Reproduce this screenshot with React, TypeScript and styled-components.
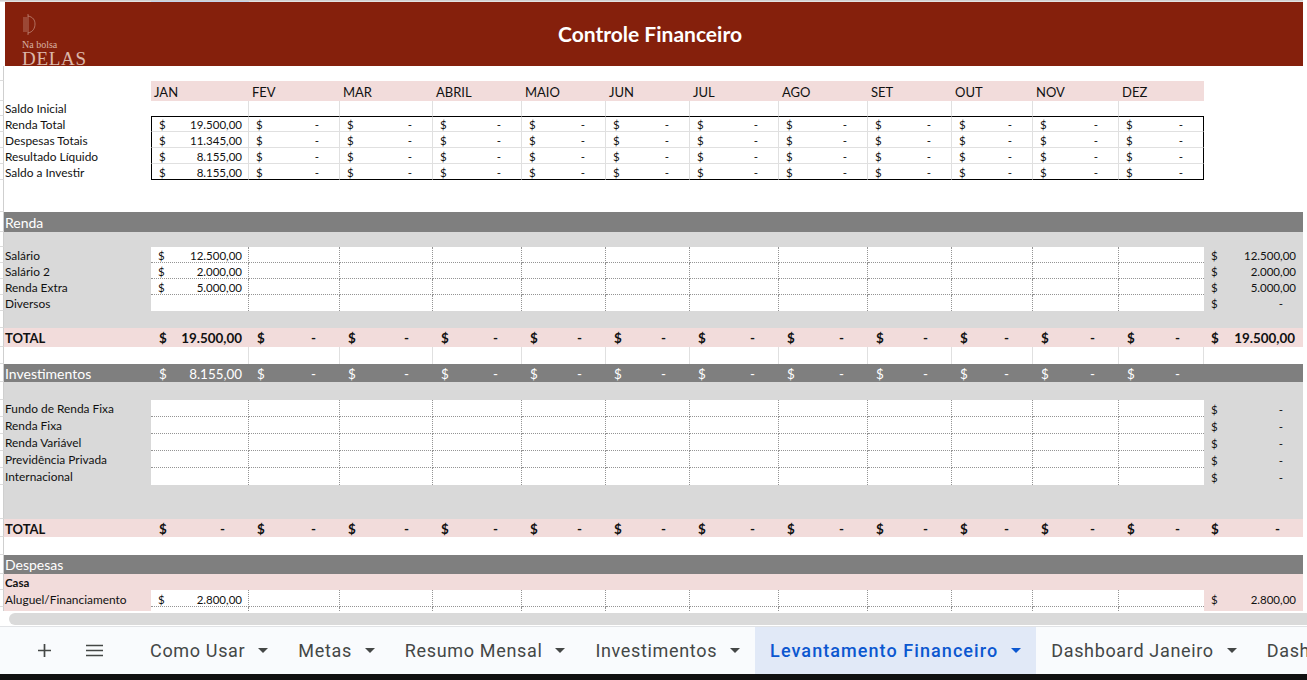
import React from "react";
import styled, { createGlobalStyle } from "styled-components";

const GlobalStyle = createGlobalStyle`
  html, body { margin: 0; padding: 0; height: 100%; overflow: hidden; background: #fff; }
  #root { height: 100vh; }
  * { box-sizing: border-box; }
`;

const COLS = "4px 147px 98px 91px 93px 89px 84px 84px 89px 89px 84px 81px 86px 85px 1fr";
const MONTHS = ["JAN", "FEV", "MAR", "ABRIL", "MAIO", "JUN", "JUL", "AGO", "SET", "OUT", "NOV", "DEZ"];
const COLORS = { red: "#85200c", pink: "#f2dcdb", grey: "#d9d9d9", dark: "#7f7f7f", white: "#fff", line: "#e0e0e0", dot: "#949494" };

const Page = styled.div`
  width: 100%;
  height: 100%;
  display: flex;
  flex-direction: column;
  background: #000;
  font-family: Lato, "Liberation Sans", sans-serif;
`;
const Sheet = styled.div`
  height: 611px;
  overflow: hidden;
  background: #fff;
  flex: none;
  padding-right: 4px;
`;
const TopStrip = styled.div`
  height: 2px;
  display: grid;
  grid-template-columns: 151px 98px 1fr;
  background: #e3e3e3;
  border-top: 1px solid #d0d0d0;
`;
const StripSelected = styled.div`
  grid-column: 2;
  background: #c6d4ee;
`;
const Banner = styled.div`
  height: 64px;
  margin-left: 5px;
  background: ${COLORS.red};
  display: grid;
  grid-template-columns: 1fr;
  position: relative;
  overflow: hidden;
`;
const BannerTitle = styled.h1`
  margin: 0;
  align-self: center;
  justify-self: center;
  padding: 0 8px 2px 0;
  color: #fff;
  font-size: 21px;
  font-weight: 700;
`;
const Logo = styled.div`
  position: absolute;
  left: 17px;
  top: 12px;
  color: #e6c8bc;
  font-family: "Liberation Serif", serif;
  display: flex;
  flex-direction: column;
  align-items: flex-start;
`;
const LogoMark = styled.svg`
  opacity: 0.8;
`;
const LogoSmall = styled.span`
  font-size: 10px;
  line-height: 10px;
  margin-top: 5px;
  opacity: 0.85;
`;
const LogoBig = styled.span`
  font-size: 19px;
  line-height: 18px;
  letter-spacing: 0.7px;
  margin-top: 0;
  font-weight: 400;
  opacity: 0.9;
`;
const Row = styled.div<{ $h: number; $bg?: string; $color?: string; $bold?: boolean }>`
  display: grid;
  grid-template-columns: ${COLS};
  height: ${(p) => p.$h}px;
  background: ${(p) => p.$bg ?? "#fff"};
  color: ${(p) => p.$color ?? "#111"};
  font-size: ${(p) => (p.$bold ? 13.4 : 11.5)}px;
  font-weight: ${(p) => (p.$bold ? 700 : 400)};
`;
const Gutter = styled.div`
  background: #fff;
  border-right: 1px solid #cfcfcf;
  border-bottom: 1px solid #dcdcdc;
`;
const Label = styled.div<{ $size?: number; $bold?: boolean; $lift?: number }>`
  display: flex;
  align-items: flex-end;
  padding: 0 0 ${(p) => p.$lift ?? 0}px 1px;
  white-space: nowrap;
  font-size: ${(p) => p.$size ?? 11.9}px;
  font-weight: ${(p) => (p.$bold ? 700 : "inherit")};
  line-height: 15px;
`;
const SectionLabel = styled(Label)`
  font-size: 14px;
  line-height: 18px;
`;
const InvestLabel = styled(SectionLabel)`
  line-height: 16px;
`;
const BlankCell = styled.div<{ $line?: "solid" | "dotted" | "none"; $bottom?: boolean; $bg?: string }>`
  background: ${(p) => p.$bg ?? "#fff"};
  border-right: ${(p) =>
    p.$line === "dotted" ? `1px dotted ${COLORS.dot}` : p.$line === "solid" ? `1px solid ${COLORS.line}` : "none"};
  border-bottom: ${(p) => (p.$bottom ? `1px dotted ${COLORS.dot}` : "none")};
`;
const Money = styled.div<{
  $line?: "solid" | "dotted" | "none";
  $bg?: string;
  $top?: boolean;
  $bottom?: boolean;
  $left?: boolean;
  $right?: boolean;
  $sep?: boolean;
  $dotted?: boolean;
  $padL?: number;
  $padR?: number;
  $padB?: number;
  $size?: number;
}>`
  display: flex;
  justify-content: space-between;
  align-items: flex-end;
  padding: 0 ${(p) => p.$padR ?? 6}px ${(p) => p.$padB ?? 0}px ${(p) => p.$padL ?? 7}px;
  line-height: ${(p) => (p.$bottom || p.$sep || p.$dotted ? 13 : 15)}px;
  ${(p) => (p.$size ? `font-size: ${p.$size}px;` : "")}
  white-space: nowrap;
  background: ${(p) => p.$bg ?? "transparent"};
  border-right: ${(p) =>
    p.$right ? "1px solid #000" : p.$line === "solid" ? `1px solid ${COLORS.line}` : p.$line === "dotted" ? `1px dotted ${COLORS.dot}` : "none"};
  border-left: ${(p) => (p.$left ? "1px solid #000" : "none")};
  border-top: ${(p) => (p.$top ? "1px solid #000" : "none")};
  border-bottom: ${(p) =>
    p.$bottom ? "1px solid #000" : p.$sep ? `1px solid ${COLORS.line}` : p.$dotted ? `1px dotted ${COLORS.dot}` : "none"};
`;

const Dollar = ({
  value,
  dash,
  valuePad,
  ...rest
}: { value?: string; dash?: number; valuePad?: number } & React.ComponentProps<typeof Money>) => (
  <Money $padR={value ? valuePad ?? 6 : dash ?? 20} {...rest}>
    <span>$</span>
    <span>{value ?? "-"}</span>
  </Money>
);

const MonthCell = styled.div`
  background: ${COLORS.pink};
  display: flex;
  align-items: flex-end;
  padding: 0 0 0 3px;
  font-size: 13px;
  line-height: 17px;
`;
const NoBg = styled.div``;

const Months = () => (
  <Row $h={20}>
    <Gutter />
    <NoBg />
    {MONTHS.map((m) => (
      <MonthCell key={m}>{m}</MonthCell>
    ))}
    <NoBg />
  </Row>
);

const Plain = ({ h, label }: { h: number; label: string }) => (
  <Row $h={h}>
    <Gutter />
    <Label>{label}</Label>
    {MONTHS.map((m, i) => (
      <BlankCell key={m} $line={i < 11 ? "solid" : "none"} />
    ))}
    <NoBg />
  </Row>
);

const Summary = ({ label, jan, first, last }: { label: string; jan: string; first?: boolean; last?: boolean }) => (
  <Row $h={16}>
    <Gutter />
    <Label>{label}</Label>
    {MONTHS.map((m, i) => (
      <Dollar
        key={m}
        value={i === 0 ? jan : undefined}
        $line={i < 11 ? "solid" : "none"}
        $top={first}
        $bottom={last}
        $sep={!last}
        $left={i === 0}
        $right={i === 11}
      />
    ))}
    <NoBg />
  </Row>
);

const Spacer = ({ h, bg }: { h: number; bg: string }) => (
  <Row $h={h} $bg={bg}>
    <Gutter />
  </Row>
);

const Section = ({ h, label }: { h: number; label: string }) => (
  <Row $h={h} $bg={COLORS.dark} $color="#fff">
    <Gutter />
    <SectionLabel>{label}</SectionLabel>
  </Row>
);

const Input = ({
  h,
  label,
  jan,
  total,
  last,
  lift,
  noTotal,
  bg = COLORS.grey,
}: {
  h: number;
  label: string;
  jan?: string;
  total?: string;
  last?: boolean;
  lift?: number;
  noTotal?: boolean;
  bg?: string;
}) => (
  <Row $h={h} $bg={bg}>
    <Gutter />
    <Label $lift={lift}>{label}</Label>
    {MONTHS.map((m, i) =>
      i === 0 && jan ? (
        <Dollar key={m} value={jan} $bg="#fff" $line="dotted" $dotted={!last} />
      ) : (
        <BlankCell key={m} $line={i < 11 ? "dotted" : "none"} $bottom={!last} />
      )
    )}
    {noTotal ? <NoBg /> : <Dollar value={total} dash={20} valuePad={7} $padL={7} />}
  </Row>
);

const Total = ({ h, lift, jan, total }: { h: number; lift: number; jan?: string; total?: string }) => (
  <Row $h={h} $bg={COLORS.pink} $bold>
    <Gutter />
    <Label $size={13} $lift={lift}>TOTAL</Label>
    {MONTHS.map((m, i) => (
      <Dollar key={m} value={i === 0 ? jan : undefined} dash={24} valuePad={7} $padL={8} $padB={lift} />
    ))}
    <Dollar value={total} dash={23} valuePad={8} $padL={7} $padB={lift} />
  </Row>
);

const InvestRow = () => (
  <Row $h={18} $bg={COLORS.dark} $color="#fff">
    <Gutter />
    <InvestLabel>Investimentos</InvestLabel>
    {MONTHS.map((m, i) => (
      <Dollar key={m} value={i === 0 ? "8.155,00" : undefined} dash={24} valuePad={7} $padL={8} $size={13.4} />
    ))}
    <NoBg />
  </Row>
);

const SolidBlank = ({ h }: { h: number }) => (
  <Row $h={h}>
    <Gutter />
    <NoBg />
    {MONTHS.map((m) => (
      <BlankCell key={m} $line="solid" />
    ))}
    <NoBg />
  </Row>
);

const Scroll = styled.div`
  height: 16px;
  flex: none;
  background: #fff;
  padding: 2px 0 1px 9px;
  border-bottom: 1px solid #e1e3e6;
`;
const ScrollThumb = styled.div`
  height: 12px;
  background: #dadada;
  border-radius: 6px 0 0 6px;
`;
const TabBar = styled.div`
  height: 47px;
  flex: none;
  background: #f9fbfd;
  display: flex;
  align-items: stretch;
  overflow: hidden;
  color: #444746;
`;
const TabTools = styled.div`
  width: 135px;
  flex: none;
  display: flex;
  align-items: center;
  padding-left: 36px;
  gap: 33px;
`;
const ToolIcon = styled.svg`
  width: 17px;
  height: 17px;
  flex: none;
`;
const Tab = styled.div<{ $active?: boolean }>`
  display: flex;
  align-items: center;
  gap: 13px;
  flex: none;
  padding: 0 15px;
  font-family: Roboto, sans-serif;
  font-size: 18px;
  font-weight: ${(p) => (p.$active ? 500 : 400)};
  letter-spacing: ${(p) => (p.$active ? 1.07 : 0.66)}px;
  white-space: nowrap;
  background: ${(p) => (p.$active ? "#e1e9f7" : "transparent")};
  color: ${(p) => (p.$active ? "#0b57d0" : "#444746")};
`;
const Caret = styled.span`
  width: 0;
  height: 0;
  border-left: 5.5px solid transparent;
  border-right: 5.5px solid transparent;
  border-top: 5.5px solid currentColor;
`;
const Black = styled.div`
  flex: 1;
  background: #111;
`;

const TABS = ["Como Usar", "Metas", "Resumo Mensal", "Investimentos", "Levantamento Financeiro", "Dashboard Janeiro", "Dashboard Fevereiro"];

export default function App() {
  return (
    <Page>
      <GlobalStyle />
      <Sheet>
        <TopStrip>
          <StripSelected />
        </TopStrip>
        <Banner>
          <Logo>
            <LogoMark width="14" height="21" viewBox="0 0 14 21" fill="none" stroke="#e6c8bc" strokeWidth="0.6">
              <path d="M2 3v15M4 3v15M6 0v21M6 2c5 1 7 4 7 8s-2 8-7 9" />
            </LogoMark>
            <LogoSmall>Na bolsa</LogoSmall>
            <LogoBig>DELAS</LogoBig>
          </Logo>
          <BannerTitle>Controle Financeiro</BannerTitle>
        </Banner>
        <Spacer h={15} bg="#fff" />
        <Months />
        <Plain h={15} label="Saldo Inicial" />
        <Summary label="Renda Total" jan="19.500,00" first />
        <Summary label="Despesas Totais" jan="11.345,00" />
        <Summary label="Resultado Líquido" jan="8.155,00" />
        <Summary label="Saldo a Investir" jan="8.155,00" last />
        <Spacer h={32} bg="#fff" />
        <Section h={20} label="Renda" />
        <Spacer h={15} bg={COLORS.grey} />
        <Input h={16} label="Salário" jan="12.500,00" total="12.500,00" />
        <Input h={16} label="Salário 2" jan="2.000,00" total="2.000,00" />
        <Input h={16} label="Renda Extra" jan="5.000,00" total="5.000,00" />
        <Input h={16} label="Diversos" last />
        <Spacer h={17} bg={COLORS.grey} />
        <Total h={19} lift={1} jan="19.500,00" total="19.500,00" />
        <SolidBlank h={17} />
        <InvestRow />
        <Spacer h={18} bg={COLORS.grey} />
        <Input h={17} lift={1} label="Fundo de Renda Fixa" />
        <Input h={17} lift={1} label="Renda Fixa" />
        <Input h={17} lift={1} label="Renda Variável" />
        <Input h={17} lift={1} label="Previdência Privada" />
        <Input h={17} lift={1} label="Internacional" last />
        <Spacer h={34} bg={COLORS.grey} />
        <Total h={18} lift={0} />
        <Spacer h={18} bg="#fff" />
        <Section h={19} label="Despesas" />
        <Row $h={16} $bg={COLORS.pink}>
          <Gutter />
          <Label $size={11.5} $bold>Casa</Label>
        </Row>
        <Input h={17} label="Aluguel/Financiamento" jan="2.800,00" total="2.800,00" bg={COLORS.pink} />
        <Input h={6} label="" bg={COLORS.pink} last noTotal />
      </Sheet>
      <Scroll>
        <ScrollThumb />
      </Scroll>
      <TabBar>
        <TabTools>
          <ToolIcon viewBox="0 0 17 17" fill="none" stroke="#444746" strokeWidth="1.7">
            <path d="M8.5 2v13M2 8.5h13" />
          </ToolIcon>
          <ToolIcon viewBox="0 0 17 17" fill="none" stroke="#444746" strokeWidth="1.7">
            <path d="M0 3.5h17M0 8.5h17M0 13.5h17" />
          </ToolIcon>
        </TabTools>
        {TABS.map((t) => (
          <Tab key={t} $active={t === "Levantamento Financeiro"}>
            {t}
            <Caret />
          </Tab>
        ))}
      </TabBar>
      <Black />
    </Page>
  );
}
